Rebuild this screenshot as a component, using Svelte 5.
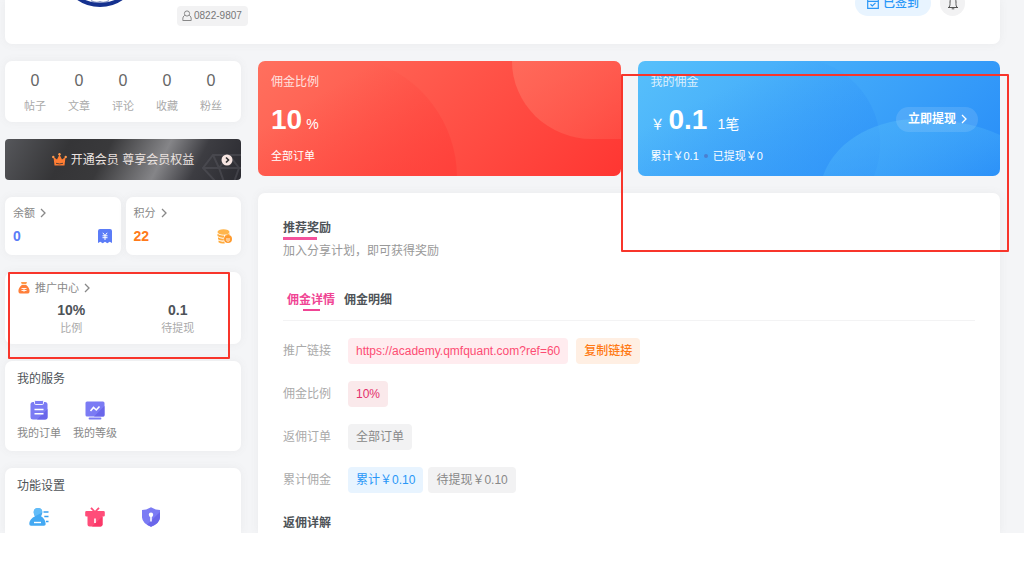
<script>
	let stats = [
		{ label: '帖子', value: 0 },
		{ label: '文章', value: 0 },
		{ label: '评论', value: 0 },
		{ label: '收藏', value: 0 },
		{ label: '粉丝', value: 0 }
	];

	let tabs = ['佣金详情', '佣金明细'];
	let activeTab = $state(0);

	let shareLink = 'https://academy.qmfquant.com?ref=60';

	function copyLink() {
		navigator.clipboard?.writeText(shareLink);
	}
</script>

{#snippet chevron()}
	<svg class="chevron" viewBox="0 0 6 10" width="6" height="10" aria-hidden="true">
		<path d="M1 1l4 4-4 4" fill="none" stroke="currentColor" stroke-width="1.3" />
	</svg>
{/snippet}

<div class="page">
	<header class="profile">
		<svg class="avatar" viewBox="0 0 80 80" width="80" height="80" aria-hidden="true">
			<circle cx="40" cy="40" r="38" fill="#fff" stroke="#15318f" stroke-width="4" />
			<path d="M31 73q5 3 9 1 4 2 9-1v1.500q-9 3-18 0z" fill="#15318f" opacity="0.5" />
		</svg>
		<span class="user-tag">
			<svg viewBox="0 0 10 12" width="10" height="12" aria-hidden="true">
				<g fill="none" stroke="#888" stroke-width="1">
					<circle cx="5" cy="3.5" r="2.6" />
					<path d="M2.8 5.2C1.2 6.3.8 7.600.8 9.200V10.500H9.200V9.200C9.200 7.600 8.800 6.300 7.200 5.200" />
				</g>
			</svg>
			0822-9807
		</span>
		<div class="profile-actions">
			<button class="sign">
				<svg viewBox="0 0 12 12" width="12" height="12" aria-hidden="true">
					<path d="M.7 1.700H11.300V11.300H.7zM.7 4.300H11.300M3.500 7.300L5.300 9 8.500 5.800M3.500 0V3M8.500 0V3" fill="none" stroke="currentColor" stroke-width="1.200" />
				</svg>
				已签到
			</button>
			<button class="bell" aria-label="消息">
				<svg viewBox="0 0 12 14" width="12" height="14" aria-hidden="true">
					<path d="M1 11.500H11M2.200 11C3.200 9.500 3 8 3 6 3 3.500 4.200 2 6 2S9 3.500 9 6C9 8 8.800 9.500 9.800 11M6 2V.8" fill="none" stroke="#555" stroke-width="1" />
					<path d="M4.700 12.300H7.300V13.300H4.700z" fill="#555" />
				</svg>
			</button>
		</div>
	</header>

	<div class="columns">
		<aside class="sidebar">
			<section class="card stats">
				{#each stats as stat}
					<div class="stat">
						<span class="stat-value">{stat.value}</span>
						<span class="stat-label">{stat.label}</span>
					</div>
				{/each}
			</section>

			<button class="vip">
				<svg class="diamond" viewBox="0 0 44 30" width="44" height="30" aria-hidden="true">
					<path d="M12 5H44L54 18 28 46 2 18zM2 18H54M12 5L18 18 28 46M28 5L18 18M28 5L38 18 28 46" fill="none" stroke="#606066" stroke-width="2" opacity="0.4" />
				</svg>
				<svg viewBox="0 0 15 13" width="15" height="13" aria-hidden="true">
					<path d="M1.500 4L5 6.500 7.500 1.500 10 6.500 13.500 4 12.500 12.500H2.500z" fill="#ff7d33" />
					<path d="M4 10.300Q7.500 11.500 11 10.300" fill="none" stroke="#4a3a34" stroke-width="0.900" />
					<circle cx="1.300" cy="4" r="1.200" fill="#ff9a4d" />
					<circle cx="7.500" cy="1.300" r="1.200" fill="#ff9a4d" />
					<circle cx="13.700" cy="4" r="1.200" fill="#ff9a4d" />
				</svg>
				<span>开通会员 尊享会员权益</span>
				<svg class="vip-go" viewBox="0 0 12 12" width="12" height="12" aria-hidden="true">
					<circle cx="6" cy="6" r="5.500" fill="#f7e6e2" />
					<path d="M5 3.500L7.500 6 5 8.500" fill="none" stroke="#333" stroke-width="1.600" />
				</svg>
			</button>

			<div class="wallets">
				<section class="card wallet">
					<a href="#balance">余额 {@render chevron()}</a>
					<div class="wallet-row blue">
						<span>0</span>
						<svg viewBox="0 0 14 15" width="14" height="15" aria-hidden="true">
							<path d="M2 0H12Q14 0 14 2V14L11.700 12.800 9.300 14.300 7 12.800 4.700 14.300 2.300 12.800 0 14V2Q0 0 2 0z" fill="#5b7cf7" />
							<path d="M4.800 3.800L7 6.500 9.200 3.800M4.500 6.800H9.500M4.500 8.700H9.500M7 6.500V11" fill="none" stroke="#fff" stroke-width="1" />
						</svg>
					</div>
				</section>
				<section class="card wallet">
					<a href="#points">积分 {@render chevron()}</a>
					<div class="wallet-row orange">
						<span>22</span>
						<svg viewBox="0 0 15 15" width="15" height="15" aria-hidden="true">
							<ellipse cx="6.500" cy="3" rx="6" ry="2.800" fill="#ffb54c" />
							<path d="M.5 4.800Q3 7 7 6.500V8.600Q3 9 .5 7zM1 8.300Q3.500 10 6.800 9.600V11.500Q3 12 1 10.300zM1.500 11.600Q4 13 7 12.500L8 14.300Q4 15 1.500 13.300z" fill="#ffab3d" />
							<path d="M7.500 6.500L12.500 4.200V6.500z" fill="#ffb54c" />
							<circle cx="11" cy="10" r="4" fill="#ff9b2f" />
							<path d="M9 10H13M9.500 11.500Q11 13 12.500 11.500" fill="none" stroke="#fff" stroke-width="0.900" />
						</svg>
					</div>
				</section>
			</div>

			<section class="card promo">
				<a href="#promotion">
					<svg viewBox="0 0 12 12" width="12" height="12" aria-hidden="true">
						<path d="M3 0H9L8.200 2.300H3.800z" fill="#ff9b4a" />
						<path d="M3.800 3H8.200C10.500 4.800 12 7.500 11.500 10Q11.200 11.500 9.500 11.500H2.500Q.8 11.500.5 10C0 7.500 1.500 4.800 3.800 3z" fill="#ff7f3a" />
						<path d="M3.500 6.500H8.500M3.500 8.500H8.500M6 6V9.800" stroke="#fff" stroke-width="0.900" />
					</svg>
					推广中心 {@render chevron()}
				</a>
				<div class="promo-row">
					<div class="promo-item"><strong>10%</strong><span>比例</span></div>
					<div class="promo-item"><strong>0.1</strong><span>待提现</span></div>
				</div>
				<div class="mark mark-promo"></div>
			</section>

			<section class="card menu">
				<h2>我的服务</h2>
				<div class="menu-items">
					<a href="#orders">
						<svg viewBox="0 0 20 20" width="20" height="20" aria-hidden="true">
							<rect x="1.500" y="2" width="17" height="17.500" rx="2.500" fill="#7b7bf4" />
							<path d="M18.500 9V17Q18.500 19.500 16 19.500H8z" fill="#6a66ea" />
							<rect x="5.500" y="0.500" width="9" height="4" rx="1.200" fill="#7b7bf4" stroke="#fff" stroke-width="0.900" />
							<path d="M5.500 9.500H14.500M5.500 13.800H14.500" stroke="#fff" stroke-width="1.500" />
						</svg>
						<span>我的订单</span>
					</a>
					<a href="#level">
						<svg viewBox="0 0 20 20" width="20" height="20" aria-hidden="true">
							<rect x="0.500" y="1.500" width="19" height="15" rx="1.500" fill="#7b7bf4" />
							<path d="M19.500 6V15Q19.500 16.500 18 16.500H9z" fill="#6a66ea" />
							<path d="M5.500 11L8.500 7.500 11.300 10 14.500 6.500" fill="none" stroke="#fff" stroke-width="1.600" />
							<path d="M4.500 18.500H15.500" stroke="#7b7bf4" stroke-width="1.800" stroke-linecap="round" />
						</svg>
						<span>我的等级</span>
					</a>
				</div>
			</section>

			<section class="card menu last">
				<h2>功能设置</h2>
				<div class="menu-items">
					<a href="#account" aria-label="账户">
						<svg viewBox="0 0 20 20" width="20" height="20" aria-hidden="true">
							<path d="M9 1C6 1 4.500 3 4.700 5.500 4.800 7 5.500 8.300 6 9.300 3 11 .5 13 .3 17Q.3 18.700 2 18.700H15Q16.700 18.700 16.700 17C16.500 13 14.500 11 12 9.300 12.600 8.300 13.300 7 13.300 5.500 13.500 3 12 1 9 1z" fill="#43a9f3" />
							<path d="M9 1C6 1 4.500 3 4.700 5.500 4.800 7 5.500 8.300 6 9.300L13.300 5.500C13.500 3 12 1 9 1z" fill="#62bcf8" />
							<path d="M5 15.500H12" stroke="#fff" stroke-width="1.400" />
							<path d="M14.500 5H19.500M15.300 9.500H19.500M17 14.500H19.500" stroke="#38a0f0" stroke-width="1.500" />
						</svg>
					</a>
					<a href="#rewards" aria-label="奖励">
						<svg viewBox="0 0 20 20" width="20" height="20" aria-hidden="true">
							<path d="M6 .8L9.500 4.500M14 .8L10.500 4.500" stroke="#ff4d79" stroke-width="1.800" />
							<path d="M1.500 4H18.500Q19.800 4 19.800 5.200V8.500Q19.800 9.500 18.500 9.500H17.500V17.500Q17.500 19.500 15.500 19.500H4.500Q2.500 19.500 2.500 17.500V9.500H1.500Q.2 9.500.2 8.500V5.200Q.2 4 1.500 4z" fill="#ff4d79" />
							<path d="M17.500 9.500V17.500Q17.500 19.500 15.500 19.500H7z" fill="#fa3868" />
							<path d="M10 11.500V16" stroke="#fff" stroke-width="1.600" />
						</svg>
					</a>
					<a href="#security" aria-label="安全">
						<svg viewBox="0 0 20 20" width="20" height="20" aria-hidden="true">
							<path d="M10 .3Q14 3 19 3V10.500Q18.500 16.500 10 19.700 1.500 16.500 1 10.500V3Q6 3 10 .3z" fill="#7b7bf4" />
							<path d="M19 5V10.500Q18.500 16.500 10 19.700L6 17.800z" fill="#6a66ea" />
							<circle cx="10" cy="7.800" r="2.200" fill="#fff" />
							<path d="M10 8V14.500" stroke="#fff" stroke-width="1.500" />
						</svg>
					</a>
				</div>
			</section>
		</aside>

		<main class="main">
			<div class="heroes">
				<section class="hero red">
					<svg class="hero-bg left" viewBox="0 0 363 115" width="363" height="115" aria-hidden="true">
						<defs>
							<linearGradient id="redArc" x1="0" y1="0" x2="1" y2="1">
								<stop offset="0.300" stop-color="#ff3a36" stop-opacity="0" />
								<stop offset="1" stop-color="#ff3a36" stop-opacity="0.600" />
							</linearGradient>
						</defs>
						<path d="M0 0H113A122 122 0 0 1 199 115H0z" fill="url(#redArc)" />
					</svg>
					<svg class="hero-bg" viewBox="0 0 363 115" width="363" height="115" aria-hidden="true">
						<defs>
							<linearGradient id="redLight" x1="0" y1="0" x2="1" y2="1">
								<stop offset="0" stop-color="#ff7765" stop-opacity="0.650" />
								<stop offset="1" stop-color="#ff7765" stop-opacity="0.250" />
							</linearGradient>
						</defs>
						<path d="M254 0A80 78 0 0 0 334 78H363V0z" fill="url(#redLight)" />
					</svg>
					<div class="hero-body">
						<div class="hero-title">佣金比例</div>
						<div class="hero-value"><strong>10</strong><small>%</small></div>
						<div class="hero-note">全部订单</div>
					</div>
				</section>

				<section class="hero blue-card">
					<svg class="hero-bg" viewBox="0 0 363 115" width="363" height="115" aria-hidden="true">
						<defs>
							<linearGradient id="blueArc" x1="0" y1="0" x2="1" y2="1">
								<stop offset="0.300" stop-color="#2d90f8" stop-opacity="0" />
								<stop offset="1" stop-color="#2d90f8" stop-opacity="0.600" />
							</linearGradient>
							<linearGradient id="blueLight" x1="0" y1="0" x2="1" y2="1">
								<stop offset="0" stop-color="#4db4fa" stop-opacity="0.700" />
								<stop offset="1" stop-color="#4db4fa" stop-opacity="0.100" />
							</linearGradient>
						</defs>
						<path d="M0 0H180A86 86 0 0 1 237 115H0z" fill="url(#blueArc)" />
						<path d="M186 115C200 75 245 58 280 58 312 58 342 64 363 74V115z" fill="url(#blueLight)" />
					</svg>
					<div class="hero-body">
						<div class="hero-title">我的佣金</div>
						<div class="hero-value"><small>￥</small><strong>0.1</strong><small class="count">1笔</small></div>
						<div class="hero-note">累计￥0.1 <i class="dot"></i> 已提现￥0</div>
					</div>
					<button class="withdraw">立即提现 {@render chevron()}</button>
				</section>
				<div class="mark mark-hero"></div>
			</div>

			<section class="card detail">
				<h1>推荐奖励</h1>
				<p class="intro">加入分享计划，即可获得奖励</p>

				<div class="tabs" role="tablist">
					{#each tabs as tab, i}
						<button role="tab" aria-selected={activeTab === i} class:active={activeTab === i} onclick={() => (activeTab = i)}>{tab}</button>
					{/each}
				</div>

				<dl>
					<div class="row wide">
						<dt>推广链接</dt>
						<dd>
							<a class="pill pink" href={shareLink}>{shareLink}</a>
							<button class="pill amber" onclick={copyLink}>复制链接</button>
						</dd>
					</div>
					<div class="row">
						<dt>佣金比例</dt>
						<dd><span class="pill rose">10%</span></dd>
					</div>
					<div class="row">
						<dt>返佣订单</dt>
						<dd><span class="pill">全部订单</span></dd>
					</div>
					<div class="row">
						<dt>累计佣金</dt>
						<dd>
							<span class="pill sky">累计￥0.10</span>
							<span class="pill">待提现￥0.10</span>
						</dd>
					</div>
				</dl>

				<h3>返佣详解</h3>
			</section>
		</main>
	</div>
</div>

<style>
	:global(body) {
		margin: 0;
		background: #fff;
	}

	.page {
		padding: 0 24px 0 5px;
		overflow: hidden;
		background: #f4f5f7;
		color: #4e5358;
		font-family: 'Liberation Sans', 'Noto Sans CJK SC', sans-serif;
		font-size: 12px;
		line-height: 18px;
	}

	h1, h2, h3, p, dl, dd {
		margin: 0;
	}

	a {
		color: inherit;
		text-decoration: none;
	}

	button {
		border: 0;
		padding: 0;
		background: none;
		color: inherit;
		font: inherit;
		cursor: pointer;
	}

	svg {
		flex: none;
	}

	.card {
		background: #fff;
		border-radius: 7px;
		box-shadow: 0 0 9px rgba(116, 116, 116, 0.08);
	}

	/* Profile strip */
	.profile {
		display: flex;
		align-items: flex-end;
		margin-bottom: 17px;
		padding: 0 35px 18px 55px;
		background: #fff;
		border-radius: 0 0 7px 7px;
		box-shadow: 0 0 9px rgba(116, 116, 116, 0.08);
	}

	.avatar {
		margin: -80px 0 19px;
	}

	.user-tag {
		display: flex;
		align-items: center;
		gap: 2px;
		margin: 6px 0 0 37px;
		padding: 1px 6px 1px 5px;
		background: #f2f2f3;
		border-radius: 4px;
		color: #777;
		font-size: 10px;
	}

	.profile-actions {
		display: flex;
		gap: 9px;
		margin: -20px 0 10px auto;
	}

	.sign {
		display: flex;
		align-items: center;
		gap: 4px;
		height: 26px;
		padding: 0 12px;
		background: #e8f4ff;
		border-radius: 13px;
		color: #2997f7;
		font-weight: 500;
	}

	.bell {
		display: flex;
		align-items: center;
		justify-content: center;
		width: 25px;
		height: 26px;
		background: #f2f2f3;
		border-radius: 13px;
	}

	.columns {
		display: grid;
		grid-template-columns: 236px minmax(0, 1fr);
		gap: 17px;
	}

	.sidebar,
	.main {
		display: flex;
		flex-direction: column;
		gap: 17px;
	}

	/* Sidebar */
	.stats {
		display: flex;
		padding: 10px 8px 7px;
	}

	.stat {
		display: flex;
		flex: 1;
		flex-direction: column;
		align-items: center;
		gap: 6px;
	}

	.stat-value {
		color: #666;
		font-size: 16px;
		line-height: 20px;
	}

	.stat-label {
		color: #aaa;
		font-size: 11px;
	}

	.vip {
		position: relative;
		display: flex;
		align-items: center;
		justify-content: center;
		gap: 4px;
		height: 41px;
		overflow: hidden;
		border-radius: 4px;
		background: linear-gradient(117deg, #56575b 0%, #353537 26%, #39393b 42%, #858588 65%, #3d3d42 80%, #2a2a30 100%);
		color: #ebe3e0;
	}

	.vip-go {
		position: absolute;
		right: 8px;
	}

	.diamond {
		position: absolute;
		right: -4px;
		bottom: 0;
	}

	.wallets {
		display: grid;
		grid-template-columns: 1fr 1fr;
		gap: 5px;
	}

	.wallet {
		padding: 7px 9px 9px 8px;
		color: #888;
	}

	.wallet a,
	.promo a {
		display: flex;
		align-items: center;
		gap: 5px;
		font-size: 11px;
	}

	.wallet-row {
		display: flex;
		align-items: center;
		justify-content: space-between;
		padding-top: 4px;
		font-size: 14px;
		font-weight: bold;
		line-height: 20px;
	}

	.blue {
		color: #5b7cf7;
	}

	.orange {
		color: #ff7a1a;
	}

	.promo {
		position: relative;
		padding: 7px 10px 7px 13px;
		color: #888;
	}

	.promo-row {
		display: flex;
		padding-top: 4px;
	}

	.promo-item {
		display: flex;
		flex: 1;
		flex-direction: column;
		align-items: center;
		color: #aaa;
		font-size: 11px;
	}

	.promo-item strong {
		color: #4e5358;
		font-size: 14px;
	}

	.mark {
		position: absolute;
		z-index: 2;
		box-sizing: border-box;
		border: 2px solid #f8352b;
		border-radius: 1px;
		pointer-events: none;
	}

	.mark-promo {
		inset: 0 11px -15px 3px;
	}

	.mark-hero {
		top: 13px;
		right: -9px;
		bottom: -76px;
		left: calc(50% - 8px);
	}

	.menu {
		padding: 9px 12px 9px;
	}

	.menu h2 {
		font-size: 12px;
		font-weight: normal;
	}

	.menu-items {
		display: flex;
		gap: 12px;
		padding-top: 12px;
	}

	.menu-items a {
		display: flex;
		flex-direction: column;
		align-items: center;
		gap: 4px;
		width: 44px;
		color: #888;
		font-size: 11px;
		white-space: nowrap;
	}

	.last {
		padding-bottom: 6px;
		border-radius: 7px 7px 0 0;
	}

	/* Commission cards */
	.heroes {
		position: relative;
		display: grid;
		grid-template-columns: 1fr 1fr;
		gap: 17px;
	}

	.hero {
		position: relative;
		display: flex;
		align-items: center;
		justify-content: space-between;
		overflow: hidden;
		padding: 12px 22px 11px 13px;
		border-radius: 7px;
		color: #fff;
	}

	.red {
		background: linear-gradient(135deg, #ff705e, #ff3632);
	}

	.blue-card {
		background: linear-gradient(135deg, #57c0fb, #288df8);
	}

	.hero-bg {
		position: absolute;
		top: 0;
		right: 0;
	}

	.hero-bg.left {
		right: auto;
		left: 0;
	}

	.hero-body {
		position: relative;
	}

	.hero-title {
		opacity: 0.8;
	}

	.hero-value {
		display: flex;
		align-items: baseline;
		gap: 4px;
		padding: 10px 0 8px;
	}

	.hero-value strong {
		font-size: 28px;
		line-height: 38px;
	}

	.hero-value small {
		font-size: 14px;
		line-height: 20px;
	}

	.hero-value .count {
		margin-left: 6px;
	}

	.hero-note {
		display: flex;
		align-items: center;
		gap: 5px;
		font-size: 11px;
	}

	.dot {
		width: 4px;
		height: 4px;
		border-radius: 2px;
		background: #4a7fd0;
	}

	.withdraw {
		position: relative;
		display: flex;
		align-items: center;
		gap: 5px;
		height: 25px;
		padding: 0 11px 0 12px;
		background: rgba(255, 255, 255, 0.12);
		border-radius: 13px;
		font-weight: bold;
	}

	/* Reward details */
	.detail {
		flex: 1;
		padding: 26px 25px 1px;
		border-radius: 7px 7px 0 0;
	}

	h1,
	h3 {
		font-size: 12px;
		font-weight: bold;
	}

	h1::after {
		content: '';
		display: block;
		width: 34px;
		height: 3px;
		background: #f4529c;
	}

	.intro {
		padding-top: 2px;
		color: #999;
	}

	.tabs {
		display: flex;
		gap: 9px;
		margin-top: 31px;
		padding: 0 4px 9px;
		border-bottom: 1px solid #f3f3f4;
	}

	.tabs button {
		font-weight: bold;
	}

	.tabs button::after {
		content: '';
		display: block;
		width: 17px;
		height: 2px;
		margin: 0 auto;
	}

	.tabs .active {
		color: #f04494;
	}

	.tabs .active::after {
		background: #f04494;
	}

	dl {
		display: flex;
		flex-direction: column;
		gap: 17px;
		padding: 17px 0 21px;
	}

	.row {
		display: flex;
		align-items: center;
		gap: 17px;
	}

	dt {
		color: #aaa;
	}

	dd {
		display: flex;
		gap: 5px;
	}

	.wide dd {
		gap: 8px;
	}

	.pill {
		padding: 4px 8px;
		background: #f2f2f3;
		border-radius: 4px;
		color: #888;
	}

	.pink {
		background: #ffecef;
		color: #fd4c73;
	}

	.amber {
		background: #ffefe3;
		color: #ff7a14;
		font-weight: 500;
	}

	.rose {
		background: #fae9eb;
		color: #e3306b;
	}

	.sky {
		background: #e8f4ff;
		color: #2997f7;
	}
</style>
